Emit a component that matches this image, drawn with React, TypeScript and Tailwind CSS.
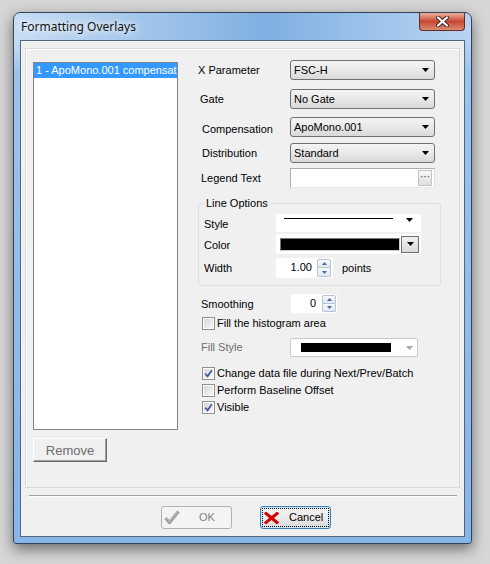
import React from "react";

const ui = "font-['Liberation_Sans',Arial,sans-serif] text-[11px] leading-[13px] text-black";

const Arrow = ({ color = "#000000" }: { color?: string }) => (
  <svg width="7" height="4" viewBox="0 0 7 4" className="shrink-0">
    <path d="M0 0H7L3.5 4Z" fill={color} />
  </svg>
);

const Combo = ({ value }: { value: string }) => (
  <div className="flex h-[20px] w-[145px] items-center justify-between rounded-[3px] border border-[#707070] bg-linear-to-b from-[#f4f4f4] via-[#e9e9e9] to-[#d9d9d9] pl-[3px] pr-[5px]">
    <span>{value}</span>
    <Arrow />
  </div>
);

const SpinButtons = () => (
  <div className="flex w-[14px] flex-col py-[1px]">
    <div className="flex h-1/2 items-center justify-center rounded-t-[2px] border border-[#b7c4d6] bg-linear-to-b from-[#f7f9fc] to-[#dfe8f3]">
      <svg width="5" height="3" viewBox="0 0 5 3">
        <path d="M0 3H5L2.5 0Z" fill="#4a6a9c" />
      </svg>
    </div>
    <div className="flex h-1/2 items-center justify-center rounded-b-[2px] border border-t-0 border-[#b7c4d6] bg-linear-to-b from-[#f7f9fc] to-[#dfe8f3]">
      <svg width="5" height="3" viewBox="0 0 5 3">
        <path d="M0 0H5L2.5 3Z" fill="#4a6a9c" />
      </svg>
    </div>
  </div>
);

const Checkbox = ({ checked, label }: { checked?: boolean; label: string }) => (
  <div className="flex h-[17px] items-center">
    <div className="ml-[4px] flex h-[13px] w-[13px] items-center justify-center border border-[#8e8f8f] bg-white">
      <div className="flex h-[9px] w-[9px] items-center justify-center bg-linear-to-br from-[#d6d6d6] to-[#f8f8f8]">
        {checked && (
          <svg width="9" height="9" viewBox="0 0 9 9">
            <path d="M1.3 4.6L3.6 7.3L7.8 1.2" stroke="#3d5a98" strokeWidth="1.7" fill="none" />
          </svg>
        )}
      </div>
    </div>
    <span className="ml-[2px]">{label}</span>
  </div>
);

export default function App() {
  return (
    <div className={`min-h-[564px] w-[490px] bg-[#d6d6d6] pl-[13px] pt-[12px] ${ui}`}>
      {/* window */}
      <div className="flex h-[532px] w-[459px] flex-col rounded-t-[7px] rounded-b-[3px] border border-[#33445a] bg-[linear-gradient(to_bottom,transparent_0,transparent_28px,#9cc3ec_60px,#86b5e8_100%),linear-gradient(to_right,#c8ddf5,#7fb0e1_55%,#b8d4f2)] px-[6px] pb-[6px] shadow-[0_5px_14px_rgba(0,0,0,0.5)]">
        {/* title bar */}
        <div className="flex h-[27px] items-start justify-between">
          <span className="pl-[1px] pt-[7px] font-['Noto_Sans',sans-serif] text-[12px] leading-[14px] text-[#111] [text-shadow:0_0_6px_#ffffff,0_0_10px_#ffffff]">
            Formatting Overlays
          </span>
          <div className="flex h-[18px] w-[46px] items-center justify-center rounded-b-[4px] border border-t-0 border-[#6b2a22] bg-linear-to-b from-[#eab0a2] via-[#c74632] to-[#d98a72]">
            <svg width="13" height="11" viewBox="0 0 13 11">
              <path d="M2 1.5L11 9.5M11 1.5L2 9.5" stroke="#3a2020" strokeWidth="4" strokeLinecap="round" />
              <path d="M2 1.5L11 9.5M11 1.5L2 9.5" stroke="#ffffff" strokeWidth="2.2" strokeLinecap="round" />
            </svg>
          </div>
        </div>

        {/* client area */}
        <div className="flex flex-1 flex-col border border-[#51677f] bg-[#f0f0f0]">
          {/* main panel */}
          <div className="mx-[4px] mt-[7px] flex h-[440px] border border-[#d9d9d9] shadow-[inset_1px_1px_0_#ffffff]">
            {/* left column */}
            <div className="ml-[7px] mt-[13px] flex flex-col">
              <div className="h-[368px] w-[145px] overflow-hidden border border-[#7f848d] bg-white">
                <div className="h-[15px] overflow-hidden whitespace-nowrap bg-[#3399ff] pl-[2px] pt-[1px] text-white">
                  1 - ApoMono.001 compensated
                </div>
              </div>
              <div className="mt-[8px] flex h-[24px] w-[74px] items-center justify-center border border-[#ffffff] border-b-[#696969] border-r-[#696969] text-[13px] text-[#6d6d6d] shadow-[inset_-1px_-1px_0_#a0a0a0]">
                Remove
              </div>
            </div>

            {/* right column */}
            <div className="ml-[20px] mt-[11px] flex w-[243px] flex-col">
              <div className="flex items-center">
                <span className="w-[92px]">X Parameter</span>
                <Combo value="FSC-H" />
              </div>
              <div className="mt-[9px] flex items-center">
                <span className="w-[92px] pl-[2px]">Gate</span>
                <Combo value="No Gate" />
              </div>
              <div className="mt-[8px] flex items-center">
                <span className="w-[92px] pl-[4px] pt-[5px]">Compensation</span>
                <Combo value="ApoMono.001" />
              </div>
              <div className="mt-[6px] flex items-center">
                <span className="w-[92px] pl-[4px] pt-[1px]">Distribution</span>
                <Combo value="Standard" />
              </div>
              <div className="mt-[5px] flex items-center">
                <span className="w-[92px] pl-[3px]">Legend Text</span>
                <div className="flex h-[20px] w-[145px] items-center justify-end border border-[#abadb3] border-b-[#e3e9ef] border-r-[#dbdfe6] bg-white pr-[2px]">
                  <div className="flex h-[16px] w-[14px] items-center justify-center border border-[#c4c4c4] bg-linear-to-b from-[#f7f7f7] to-[#dedede] pb-[3px] text-[10px] leading-none text-[#333]">
                    ···
                  </div>
                </div>
              </div>

              {/* line options */}
              <fieldset className="mt-[9px] w-[243px] rounded-[3px] border border-[#d5dfe5] px-[5px] pb-[7px]">
                <legend className="px-[2px] leading-[13px]">Line Options</legend>
                <div className="mt-[4px] flex h-[18px] items-start">
                  <span className="w-[72px] pt-[4px]">Style</span>
                  <div className="flex h-[18px] w-[145px] items-start bg-white pl-[8px] pr-[8px] pt-[4px]">
                    <div className="h-[1px] w-[109px] bg-black" />
                    <div className="ml-auto">
                      <Arrow />
                    </div>
                  </div>
                </div>
                <div className="mt-[2px] flex h-[20px] items-center">
                  <span className="w-[72px] pt-[3px]">Color</span>
                  <div className="flex h-[20px] w-[145px] items-center bg-white pl-[4px] pr-[2px]">
                    <div className="h-[13px] w-[121px] border border-[#777777] border-b-[#cfcfcf] border-r-[#cfcfcf] bg-black" />
                    <div className="ml-[1px] flex h-[17px] w-[18px] items-center justify-center border border-[#6f6f6f] bg-linear-to-b from-[#f0f0f0] to-[#dadada]">
                      <Arrow />
                    </div>
                  </div>
                </div>
                <div className="mt-[4px] flex h-[20px] items-center">
                  <span className="w-[72px] pt-[1px]">Width</span>
                  <div className="flex h-[20px] w-[57px] bg-white pr-[2px]">
                    <span className="flex-1 pr-[5px] pt-[3px] text-right">1.00</span>
                    <SpinButtons />
                  </div>
                  <span className="ml-[9px]">points</span>
                </div>
              </fieldset>

              <div className="mt-[8px] flex h-[19px] items-center">
                <span className="w-[93px] pl-[3px] pt-[2px]">Smoothing</span>
                <div className="flex h-[19px] w-[46px] bg-white pr-[1px]">
                  <span className="flex-1 pr-[6px] pt-[3px] text-right">0</span>
                  <SpinButtons />
                </div>
              </div>
              <div className="mt-[2px]">
                <Checkbox label="Fill the histogram area" />
              </div>
              <div className="mt-[6px] flex h-[19px] items-center">
                <span className="w-[92px] pl-[3px] text-[#6d6d6d]">Fill Style</span>
                <div className="flex h-[19px] w-[128px] items-center rounded-[2px] border border-[#c9c9c9] bg-white pl-[10px] pr-[4px]">
                  <div className="h-[9px] w-[90px] bg-black" />
                  <div className="ml-auto">
                    <Arrow color="#a8a8a8" />
                  </div>
                </div>
              </div>
              <div className="mt-[8px]">
                <Checkbox checked label="Change data file during Next/Prev/Batch" />
                <Checkbox label="Perform Baseline Offset" />
                <Checkbox checked label="Visible" />
              </div>
            </div>
          </div>

          {/* separator */}
          <div className="ml-[8px] mt-[7px] h-[2px] w-[428px] border-t border-[#a0a0a0] border-b border-b-white" />

          {/* buttons */}
          <div className="ml-[140px] mt-[9px] flex gap-[28px]">
            <div className="flex h-[23px] w-[71px] items-center rounded-[3px] border border-[#adb2b5] bg-[#f4f4f4] pl-[2px] text-[#838383]">
              <svg width="16" height="15" viewBox="0 0 16 15">
                <path d="M1.5 8L5.5 12.5L14.5 1.5" stroke="#9a9a9a" strokeWidth="3.2" fill="none" strokeLinejoin="round" />
                <path d="M2 8L5.5 12L14 2" stroke="#c4c4c4" strokeWidth="1" fill="none" />
              </svg>
              <span className="ml-[19px]">OK</span>
            </div>
            <div className="flex h-[23px] w-[71px] items-center rounded-[3px] border border-[#3c7fb1] bg-linear-to-b from-[#f4f4f4] via-[#ebebeb] to-[#d8d8d8] p-[1px] shadow-[inset_0_0_0_1px_#c7e6f8]">
              <div className="flex h-full w-full items-center border border-dotted border-black pl-[1px]">
                <svg width="15" height="12" viewBox="0 0 15 12">
                  <path d="M2 1.5L13 10.5M13 1.5L2 10.5" stroke="#d40000" strokeWidth="3" strokeLinecap="square" />
                </svg>
                <span className="ml-[10px]">Cancel</span>
              </div>
            </div>
          </div>
        </div>
      </div>
    </div>
  );
}
